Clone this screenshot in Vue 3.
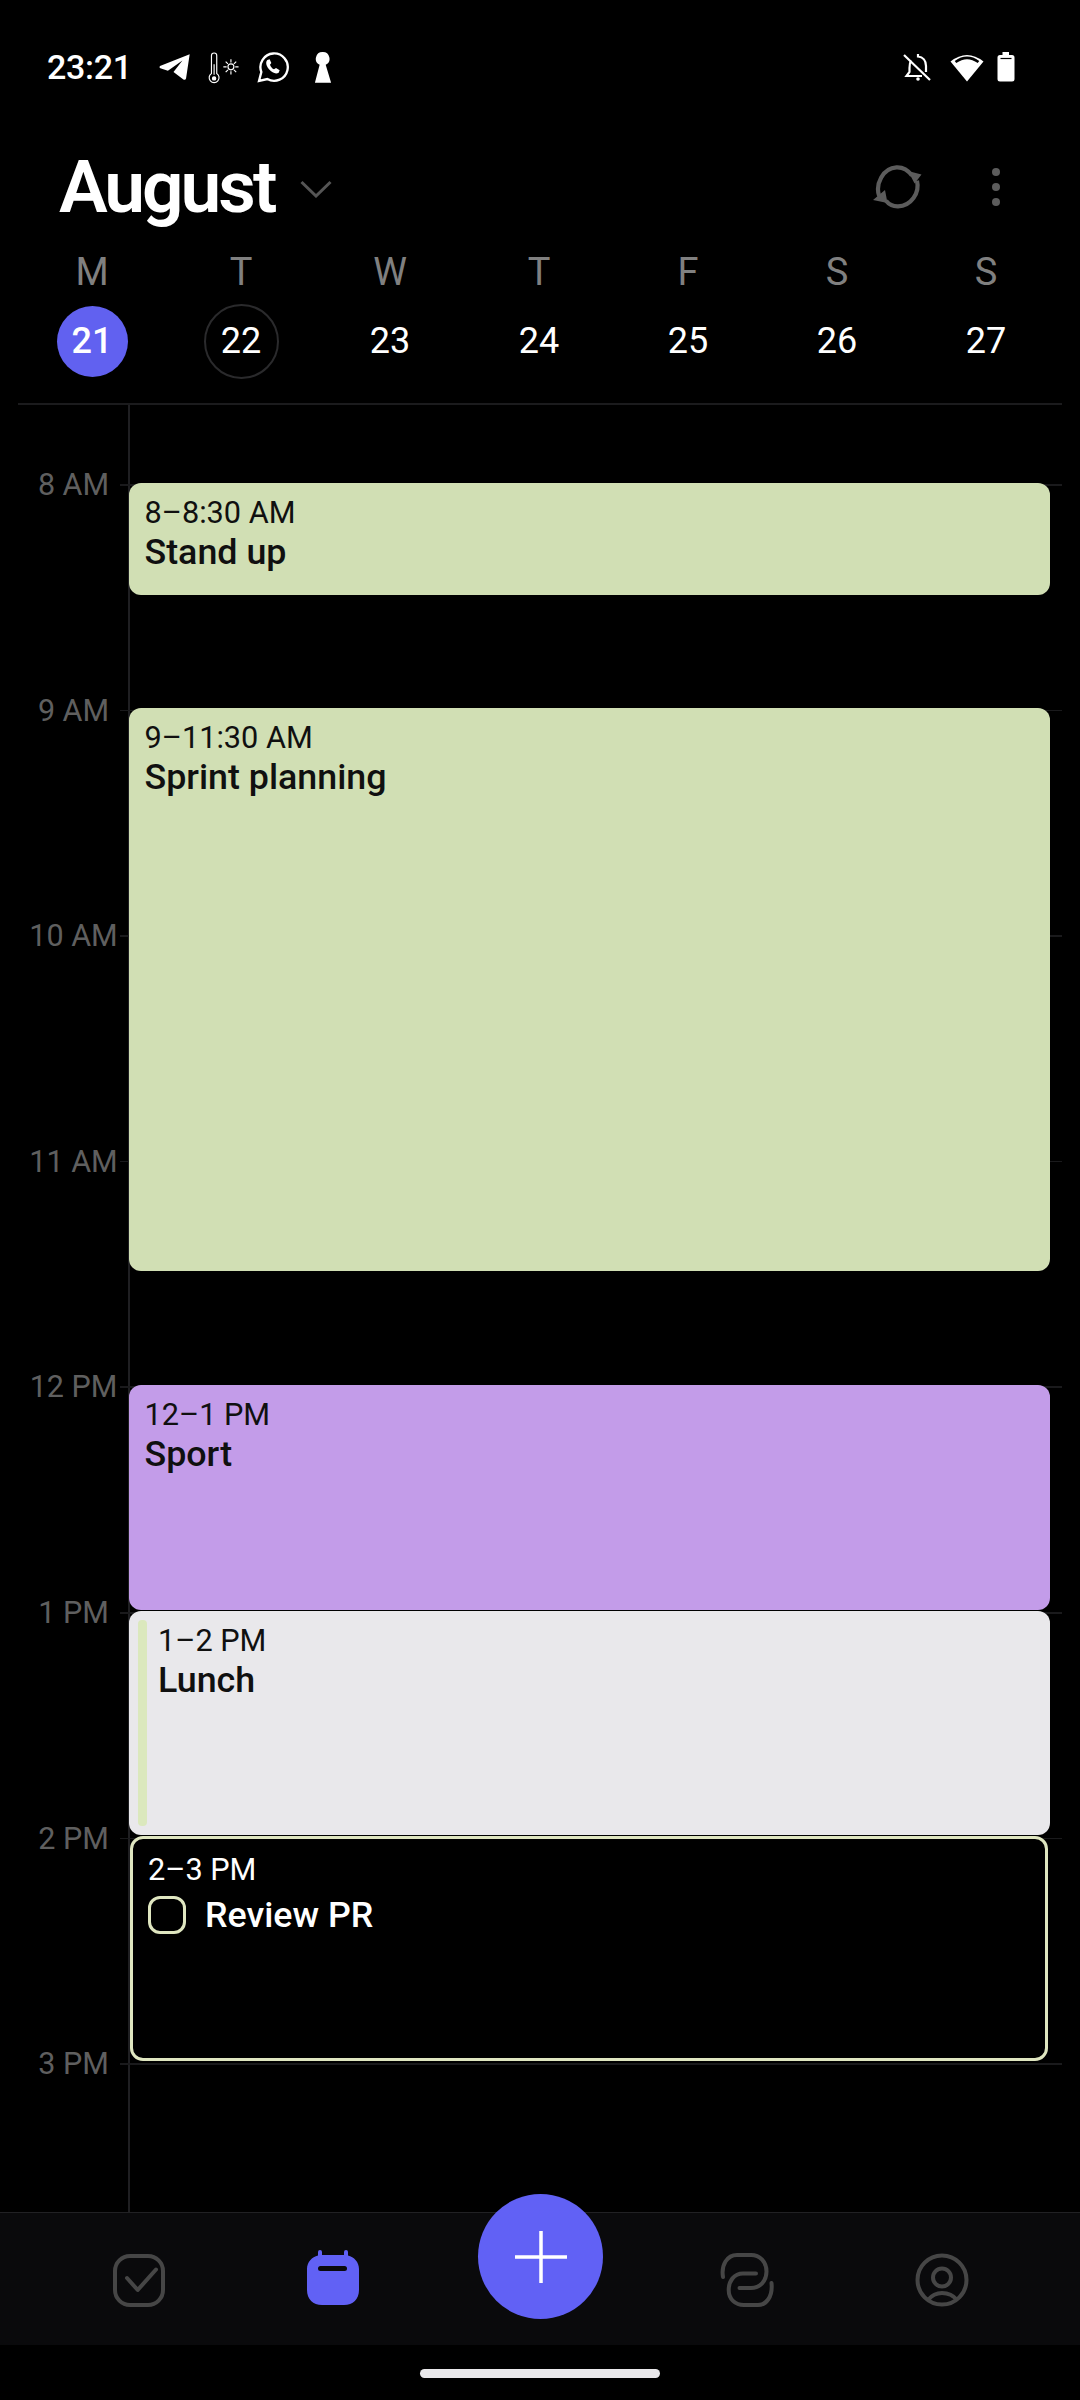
<script setup>
const HOUR = 225.6
const ZERO = 79.5 // y of 8 AM inside the timeline
const yOf = (h) => ZERO + (h - 8) * HOUR

const days = [
  { l: 'M', d: 21, cls: 'today' },
  { l: 'T', d: 22, cls: 'ring' },
  { l: 'W', d: 23, cls: '' },
  { l: 'T', d: 24, cls: '' },
  { l: 'F', d: 25, cls: '' },
  { l: 'S', d: 26, cls: '' },
  { l: 'S', d: 27, cls: '' }
]

const hours = [
  { h: 8, t: '8 AM' }, { h: 9, t: '9 AM' }, { h: 10, t: '10 AM' }, { h: 11, t: '11 AM' },
  { h: 12, t: '12 PM' }, { h: 13, t: '1 PM' }, { h: 14, t: '2 PM' }, { h: 15, t: '3 PM' }
]

const events = [
  { start: 8, len: 0.5, time: '8–8:30 AM', title: 'Stand up', cls: 'green' },
  { start: 9, len: 2.5, time: '9–11:30 AM', title: 'Sprint planning', cls: 'green' },
  { start: 12, len: 1, time: '12–1 PM', title: 'Sport', cls: 'purple' },
  { start: 13, len: 1, time: '1–2 PM', title: 'Lunch', cls: 'grey' },
  { start: 14, len: 1, time: '2–3 PM', title: 'Review PR', cls: 'task' }
]
</script>

<template>
  <div class="phone">
    <div class="status">
      <span class="clock">23:21</span>
      <svg class="s-tg" viewBox="56 70 100 90" width="33" height="30"><path fill="#fff" d="M152 76L62 112Q58 116 63 119L86 126L130 95L103 130L133 153Q139 156 141 150Z"/></svg>
      <svg class="s-th" viewBox="200 60 105 100" width="35" height="33" fill="none" stroke="#fff" stroke-width="3.5">
        <path d="M213 128V74a8 8 0 0 1 16 0V128a15 15 0 1 1-16 0Z"/>
        <circle cx="221" cy="143" r="5" fill="#fff"/>
        <path d="M221 100V132"/>
        <circle cx="272" cy="108" r="9"/>
        <path d="M272 85V95M272 121V131M249 108H259M285 108H295M256 92L263 99M281 117L288 124M256 124L263 117M281 99L288 92"/>
      </svg>
      <svg class="s-wa" viewBox="352 65 96 96" width="32" height="32">
        <path fill="none" stroke="#fff" stroke-width="7" d="M358 155L365 128A41 41 0 1 1 383 149Z"/>
        <path fill="#fff" d="M383 92C378 97 378 107 388 120C398 132 410 135 417 130L420 123L409 116L403 120C398 118 393 112 391 106L395 101L390 90Z"/>
      </svg>
      <svg class="s-key" viewBox="520 66 52 92" width="18" height="31"><path fill="#fff" d="M545 66a20 20 0 0 1 9 38L570 157H522L536 104A20 20 0 0 1 545 66Z"/></svg>
      <span class="status-space"></span>
      <svg class="s-bell" viewBox="0 0 28 30" width="28" height="30" fill="none" stroke="#fff" stroke-width="2.2">
        <path d="M8 8.5C6.5 11 6.5 13 6.5 16V20L3.5 24H19"/>
        <path d="M15 2V4.5C20 5 23 9 23 14V20"/>
        <path d="M1 3L27 28"/>
        <circle cx="15" cy="27" r="1.8" fill="#fff" stroke="none"/>
      </svg>
      <svg class="s-wifi" viewBox="0 0 34 29" width="34" height="29">
        <path fill="#fff" d="M17 28.5L.5 8.5Q17-4.5 33.5 8.5Z"/>
        <path fill="none" stroke="#000" stroke-width="2.6" d="M5.5 9Q17 .8 28.5 9"/>
      </svg>
      <svg class="s-bat" viewBox="0 0 18 30" width="18" height="30">
        <path fill="#fff" d="M5.5 0H12V3H15A2.5 2.5 0 0 1 17.5 5.5V27A2.5 2.5 0 0 1 15 29.5H3A2.5 2.5 0 0 1 .5 27V5.5A2.5 2.5 0 0 1 3 3H5.5Z"/>
        <path stroke="#000" stroke-width="1.2" d="M3.5 6.5H14.5"/>
      </svg>
    </div>

    <div class="title-row">
      <h1 class="month">August</h1>
      <svg class="chev" viewBox="0 0 32 18" width="32" height="18" fill="none" stroke="#555" stroke-width="3"><path d="M1.500 2L16 16L30.500 2"/></svg>
      <span class="title-space"></span>
      <svg class="sync" viewBox="0 0 50 45" width="50" height="45" fill="none" stroke="#5c5c5c" stroke-width="4.200">
        <path d="M6.200 31C2 19 10 3 23.500 2.300C30 2 35 5 39 10.500"/>
        <path d="M44 15.700C47 28 38 41 25 41.300C20 41.400 16 39.500 13 35.700"/>
        <path fill="#5c5c5c" stroke="none" d="M35 6L48.500 9.500L41.600 18.500ZM0 35L12 25L14.500 38Z"/>
      </svg>
      <div class="dots"><i></i><i></i><i></i></div>
    </div>

    <div class="week">
      <div v-for="(x, i) in days" :key="'l' + i" class="wd">{{ x.l }}</div>
    </div>
    <div class="dates">
      <div v-for="x in days" :key="x.d" class="date-cell">
        <span class="date" :class="x.cls">{{ x.d }}</span>
      </div>
    </div>
    <div class="divider"></div>

    <div class="timeline">
      <div class="vline"></div>
      <template v-for="h in hours" :key="h.h">
        <div class="hline" :style="{ top: yOf(h.h) + 'px' }"></div>
        <div class="hour" :style="{ top: yOf(h.h) - 17 + 'px' }">{{ h.t }}</div>
      </template>
      <div
        v-for="e in events"
        :key="e.title"
        class="event"
        :class="e.cls"
        :style="{ top: yOf(e.start) - 1.2 + 'px', height: e.len * HOUR - 1 + 'px' }"
      >
        <i v-if="e.cls === 'grey'" class="strip"></i>
        <div class="ev-time">{{ e.time }}</div>
        <div v-if="e.cls === 'task'" class="task-row">
          <span class="box"></span>
          <span class="ev-title">{{ e.title }}</span>
        </div>
        <div v-else class="ev-title">{{ e.title }}</div>
      </div>
    </div>

    <div class="nav">
      <svg class="nav-icon" viewBox="0 0 54 54" fill="none" stroke="#464646" stroke-width="4">
        <rect x="3" y="3" width="48" height="49" rx="15"/>
        <path stroke-linecap="round" stroke-linejoin="round" d="M15 25L25.700 37L44 16.500"/>
      </svg>
      <svg class="nav-icon n2" viewBox="0 0 54 56">
        <path fill="#6161f5" d="M14 0a2 2 0 0 1 2 2V5H38V2a2 2 0 0 1 4 0V5.500C48 7 53 12 53 19V40C53 49 47 55 38 55H16C7 55 1 49 1 40V19C1 12 6 7 12 5.500V2a2 2 0 0 1 2-2Z"/>
        <rect x="12" y="16" width="29" height="5" rx="2.500" fill="#0a0a0c"/>
      </svg>
      <svg class="nav-icon n3" viewBox="0 0 54 54" fill="none" stroke="#464646" stroke-width="4" stroke-linecap="round">
        <path d="M3 24C1 12 7 2 17 2H31C40 2 46.500 9 46.500 18.500C46.500 28 40 35 31 35H19.500"/>
        <path d="M36 20.500H23C14 20.500 8.700 28 8.700 37C8.700 46 15 52 24 52H38C46 52 53 44 51.500 30"/>
      </svg>
      <svg class="nav-icon n4" viewBox="0 0 54 54" fill="none" stroke="#464646" stroke-width="4">
        <circle cx="27" cy="27" r="24.500"/>
        <circle cx="27" cy="24.500" r="9"/>
        <path d="M13 47C17 42 22 40 27 40C33 40 38 42 42 47"/>
      </svg>
    </div>

    <button class="fab" aria-label="Add">
      <svg viewBox="0 0 52 52" width="52" height="52" stroke="#fff" stroke-width="3.500"><path d="M26 0V52M0 26H52"/></svg>
    </button>

    <div class="gesture"><span></span></div>
  </div>
</template>

<style>
html, body { background: #000; }
</style>

<style scoped>
.phone {
  position: relative;
  width: 1080px;
  height: 2400px;
  background: #000;
  color: #fff;
  font-family: Roboto, "Liberation Sans", sans-serif;
  display: flex;
  flex-direction: column;
  overflow: hidden;
}

/* status bar */
.status {
  height: 134px;
  flex: none;
  display: flex;
  align-items: center;
  padding: 0 65px 0 47px;
  box-sizing: border-box;
}
.clock { font-size: 34px; font-weight: 500; width: 111px; letter-spacing: -0.3px; }
.s-tg { margin-right: 16px; }
.s-th { margin-right: 15px; }
.s-wa { margin-right: 25px; }
.status-space { flex: 1; }
.s-bell { margin-right: 19px; }
.s-wifi { margin-right: 13px; }

/* title */
.title-row {
  margin-top: 13px;
  height: 80px;
  flex: none;
  display: flex;
  align-items: center;
  padding: 0 80px 0 59px;
}
.month {
  margin: 0;
  font-size: 73px;
  line-height: 80px;
  font-weight: 600;
  letter-spacing: -3px;
}
.chev { margin: 4px 0 0 26px; }
.title-space { flex: 1; }
.sync { margin-right: 69px; }
.dots { display: flex; flex-direction: column; gap: 7px; }
.dots i { width: 8px; height: 8px; border-radius: 50%; background: #5c5c5c; }

/* week */
.week, .dates {
  flex: none;
  display: grid;
  grid-template-columns: repeat(7, 149px);
  padding-left: 17.500px;
}
.week { margin-top: 25px; height: 40px; }
.wd { text-align: center; font-size: 38px; line-height: 40px; color: #808080; }
.dates {
  margin-top: 11px;
  height: 76px;
  padding-bottom: 24px;
}
.date-cell { display: flex; align-items: center; justify-content: center; }
.date {
  width: 75px;
  height: 75px;
  box-sizing: border-box;
  border-radius: 50%;
  display: flex;
  align-items: center;
  justify-content: center;
  font-size: 36px;
}
.date.today {
  width: 71px;
  height: 71px;
  background: #6161f0;
  font-weight: 500;
}
.date.ring { border: 2px solid #2a2a2c; }
.divider {
  flex: none;
  height: 1.500px;
  margin: 0 18px;
  background: #1b1b1d;
}

/* timeline */
.timeline {
  position: relative;
  flex: 1;
  min-height: 0;
}
.vline {
  position: absolute;
  left: 128px;
  top: 0;
  bottom: 0;
  width: 1.500px;
  background: #1f1f22;
}
.hline {
  position: absolute;
  left: 120px;
  right: 18px;
  height: 1.500px;
  background: #1a1a1c;
}
.hour {
  position: absolute;
  left: 0;
  width: 147px;
  text-align: center;
  font-size: 30.500px;
  line-height: 36px;
  color: #5f5f5f;
}
.event {
  position: absolute;
  left: 128.500px;
  width: 921px;
  box-sizing: border-box;
  border-radius: 12px;
  padding: 12px 16px 0;
  color: #101010;
}
.green { background: #d1dfb4; }
.purple { background: #c39ce9; }
.grey { background: #e9e8eb; padding-left: 29.500px; }
.task {
  background: #000;
  border: 3px solid #dfe6c0;
  color: #fff;
  left: 129.500px;
  width: 918.500px;
  padding: 13px 15.500px 0;
  border-radius: 13px;
}
.strip {
  position: absolute;
  left: 9.500px;
  top: 9px;
  bottom: 9px;
  width: 9px;
  background: #dbe8bd;
  border-radius: 4px;
}
.ev-time { font-size: 30.700px; line-height: 36px; }
.ev-title { font-size: 35.800px; line-height: 40px; font-weight: 500; margin-top: 1px; }
.task-row { display: flex; align-items: center; margin-top: 7px; gap: 19px; }
.task-row .ev-title { margin-top: 0; }
.box {
  width: 38px;
  height: 38px;
  box-sizing: border-box;
  border: 3.500px solid #dfe6c0;
  border-radius: 12px;
}

/* bottom nav */
.nav {
  flex: none;
  height: 133px;
  box-sizing: border-box;
  background: #0a0a0c;
  border-top: 1.500px solid #212124;
  display: flex;
  align-items: flex-start;
  padding: 40px 0 0 112px;
}
.nav-icon { width: 54px; height: 54px; flex: none; }
.n2 { margin: -3px 0 0 140px; height: 56px; }
.n3 { margin-left: 360px; }
.n4 { margin-left: 141px; }
.fab {
  position: absolute;
  left: 478px;
  top: 2194px;
  width: 125px;
  height: 125px;
  border: 0;
  padding: 0;
  border-radius: 50%;
  background: #6161f5;
  display: flex;
  align-items: center;
  justify-content: center;
}
.gesture {
  flex: none;
  height: 55px;
  box-sizing: border-box;
  display: flex;
  justify-content: center;
  padding-top: 24px;
}
.gesture span {
  width: 240px;
  height: 9px;
  border-radius: 5px;
  background: #e9e8eb;
}
</style>
